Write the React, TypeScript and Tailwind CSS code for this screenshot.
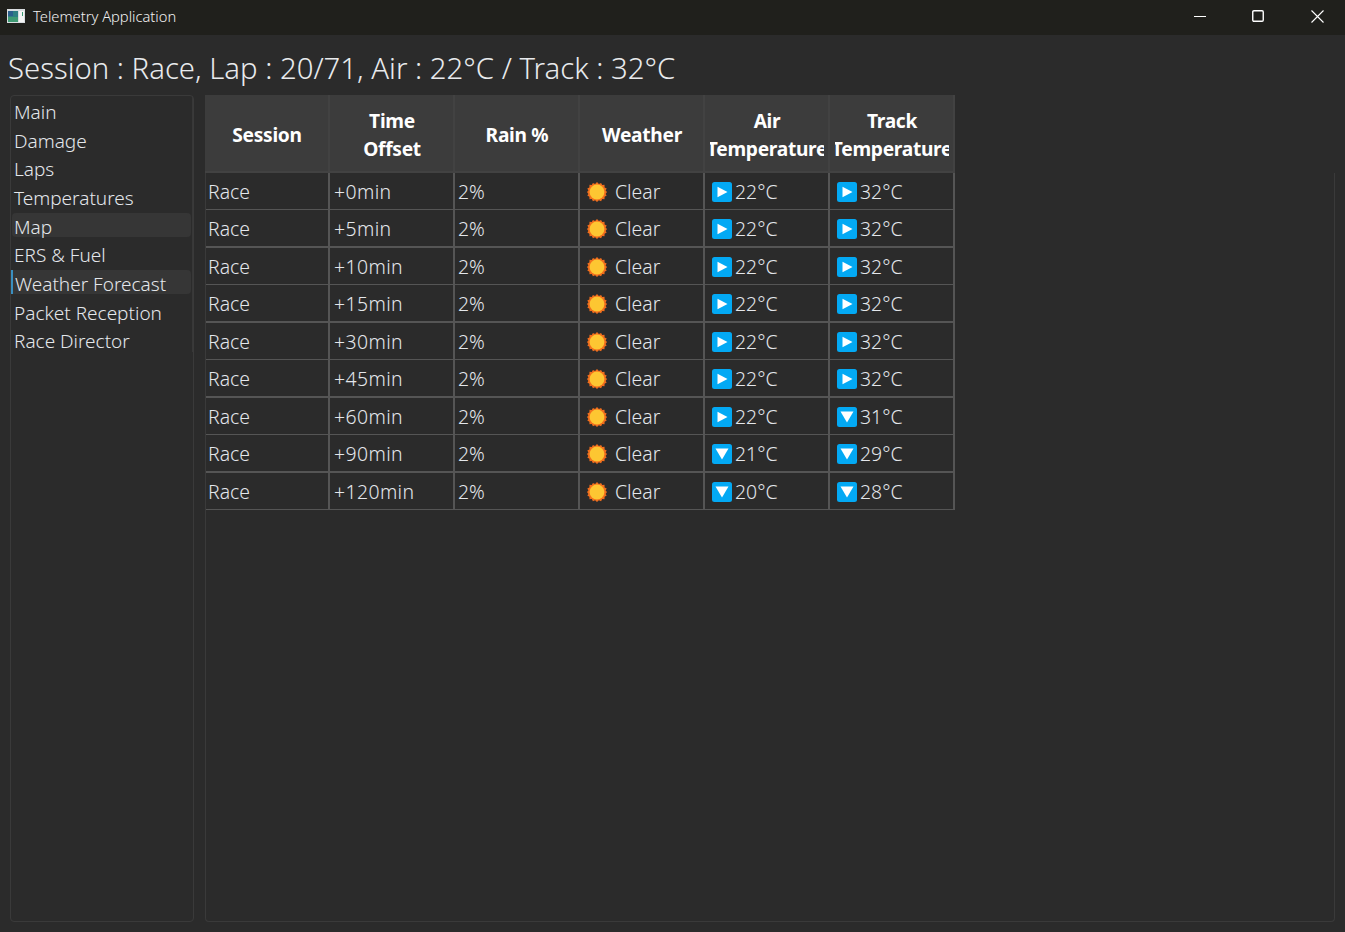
const tabs = ["Main", "Damage", "Laps", "Temperatures", "Map", "ERS & Fuel", "Weather Forecast", "Packet Reception", "Race Director"];

const headers = [["Session"], ["Time", "Offset"], ["Rain %"], ["Weather"], ["Air", "Temperature"], ["Track", "Temperature"]];

type Trend = "flat" | "down";

const rows: { offset: string; air: string; airTrend: Trend; track: string; trackTrend: Trend }[] = [
  { offset: "+0min", air: "22°C", airTrend: "flat", track: "32°C", trackTrend: "flat" },
  { offset: "+5min", air: "22°C", airTrend: "flat", track: "32°C", trackTrend: "flat" },
  { offset: "+10min", air: "22°C", airTrend: "flat", track: "32°C", trackTrend: "flat" },
  { offset: "+15min", air: "22°C", airTrend: "flat", track: "32°C", trackTrend: "flat" },
  { offset: "+30min", air: "22°C", airTrend: "flat", track: "32°C", trackTrend: "flat" },
  { offset: "+45min", air: "22°C", airTrend: "flat", track: "32°C", trackTrend: "flat" },
  { offset: "+60min", air: "22°C", airTrend: "flat", track: "31°C", trackTrend: "down" },
  { offset: "+90min", air: "21°C", airTrend: "down", track: "29°C", trackTrend: "down" },
  { offset: "+120min", air: "20°C", airTrend: "down", track: "28°C", trackTrend: "down" },
];

const SunIcon = () => (
  <svg width="20" height="20" viewBox="0 0 20 20" className="shrink-0">
    <polygon
      points="10,0 11.9,1.9 14.1,1 15.2,3.1 17.5,2.7 17.6,5.6 19.7,6.5 18.6,8.6 20,10 18.6,11.9 19.7,13.5 17.6,14.7 17.5,17.2 15.2,17.1 14.1,19.2 11.9,18.3 10,20 8.1,18.3 5.9,19.2 4.8,17.1 2.5,17.2 2.4,14.7 0.3,13.5 1.4,11.9 0,10 1.4,8.6 0.3,6.5 2.4,5.6 2.5,2.7 4.8,3.1 5.9,1 8.1,1.9"
      fill="#f26f1d"
    />
    <circle cx="10" cy="10" r="7.4" fill="#fdc632" />
  </svg>
);

const TrendIcon = ({ trend }: { trend: Trend }) => (
  <svg width="20" height="20" viewBox="0 0 20 20" className="mt-[2px] shrink-0">
    <rect width="20" height="20" rx="2.5" fill="#03a9f4" />
    {trend === "flat" ? <path d="M5.5 4.7L15.5 10L5.5 15.2z" fill="#fff" /> : <path d="M3.5 4.5H16.5L10 15.5z" fill="#fff" />}
  </svg>
);

const Temp = ({ value, trend }: { value: string; trend: Trend }) => (
  <div className="flex items-center gap-[3px] pl-[7px]">
    <TrendIcon trend={trend} />
    <span>{value}</span>
  </div>
);

export default function App() {
  return (
    <div className="flex h-[932px] w-[1345px] flex-col overflow-hidden bg-[#2b2b2b] font-['Noto_Sans','Open_Sans',sans-serif] font-[350] text-[#e4e7eb]">
      <div className="flex h-[35px] shrink-0 items-center bg-[#20201c] pb-[3px] pl-[7px]">
        <svg width="18" height="14" viewBox="0 0 18 14">
          <rect width="18" height="14" fill="#d9dde0" />
          <rect x="1" y="2" width="10" height="11" fill="#2f7f83" />
          <rect x="1" y="2" width="5" height="5" fill="#2b5f8c" />
          <rect x="1" y="8" width="10" height="5" fill="#3f9a73" />
          <rect x="12" y="2" width="5" height="11" fill="#f4f5f5" />
          <rect x="15" y="3" width="1" height="4" fill="#3a9a72" />
        </svg>
        <span className="ml-[8px] text-[14.7px] text-[#f2f2f2]">Telemetry Application</span>
        <div className="ml-auto flex items-center text-white">
          <div className="flex w-[59px] justify-center pl-[5px]">
            <svg width="12" height="12" viewBox="0 0 12 12"><path d="M0 6.5H12" stroke="currentColor" /></svg>
          </div>
          <div className="flex w-[59px] justify-center pl-[3px]">
            <svg width="12" height="12" viewBox="0 0 12 12" fill="none"><rect x="0.75" y="0.75" width="10.5" height="10.5" rx="1.2" stroke="currentColor" strokeWidth="1.4" /></svg>
          </div>
          <div className="flex w-[59px] justify-center pl-[3px]">
            <svg width="13" height="13" viewBox="0 0 13 13"><path d="M0.5 0.5L12.5 12.5M12.5 0.5L0.5 12.5" stroke="currentColor" strokeWidth="1.1" /></svg>
          </div>
        </div>
      </div>

      <div className="flex h-[60px] shrink-0 items-center pl-[8px] pt-[8px] text-[29.3px] leading-none text-[#e8eaed]">
        Session : Race, Lap : 20/71, Air : 22°C / Track : 32°C
      </div>

      <div className="flex flex-1 gap-[11px] pb-[10px] pl-[10px] pr-[10px]">
        <div className="w-[184px] shrink-0 rounded-[4px] border border-[#3a3a3a] pl-[1px]">
          <div className="border-r border-[#383838] pr-[1px] pt-[2.35px]">
            {tabs.map((tab) => (
              <div
                key={tab}
                className={`mb-[4.7px] flex h-[24px] items-center rounded-[4px] pl-[2px] pt-[4px] text-[19px] leading-none ${
                  tab === "Map" || tab === "Weather Forecast" ? "bg-[#363636]" : ""
                } ${tab === "Weather Forecast" ? "-ml-[1px] rounded-l-none border-l-2 border-[#3a8fc0] pl-[1px]" : ""}`}
              >
                {tab}
              </div>
            ))}
          </div>
        </div>

        <div className="flex flex-1 flex-col">
          <div className="grid w-[750px] grid-cols-[repeat(6,125px)]">
            {headers.map((lines) => (
              <div
                key={lines[0]}
                className="flex h-[78px] flex-col items-center justify-center border-b-2 border-r-2 border-[#424242] bg-[#3c3c3c] pl-[1px] pt-[4px] text-[19.2px] font-bold leading-[28px] tracking-[-0.3px] text-white"
              >
                {lines.map((line) => (
                  <div key={line} className="flex w-[114px] justify-center overflow-hidden whitespace-nowrap">
                    <span className="shrink-0">{line}</span>
                  </div>
                ))}
              </div>
            ))}
          </div>
          <div className="flex-1 rounded-b-[4px] border-x border-b border-[#3a3a3a]">
            <div className="grid grid-cols-[124px_repeat(5,125px)] text-[19.4px]">
              {rows.map((row, i) => {
                const cell = `flex items-center border-r-2 border-[#555555] pt-[1px] ${
                  i % 2 === 0 ? "h-[37px] border-b" : "h-[38px] border-b-2"
                }`;
                return [
                  <div key={`${row.offset}-s`} className={`${cell} pl-[2px]`}>Race</div>,
                  <div key={`${row.offset}-o`} className={`${cell} pl-[4px] tracking-[0.4px]`}>{row.offset}</div>,
                  <div key={`${row.offset}-r`} className={`${cell} pl-[3px]`}>2%</div>,
                  <div key={`${row.offset}-w`} className={`${cell} gap-[8px] pl-[7px]`}>
                    <SunIcon />
                    <span>Clear</span>
                  </div>,
                  <div key={`${row.offset}-a`} className={cell}><Temp value={row.air} trend={row.airTrend} /></div>,
                  <div key={`${row.offset}-t`} className={cell}><Temp value={row.track} trend={row.trackTrend} /></div>,
                ];
              })}
            </div>
          </div>
        </div>
      </div>
    </div>
  );
}
